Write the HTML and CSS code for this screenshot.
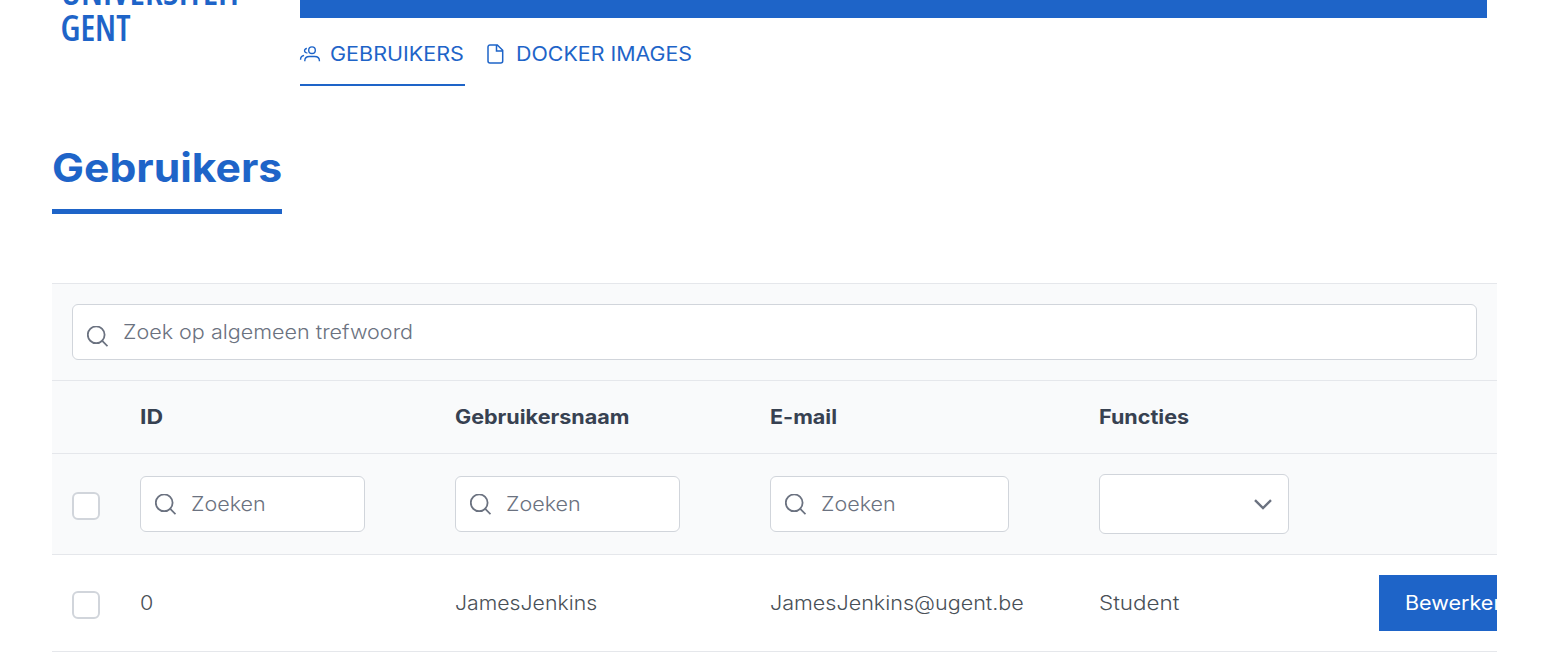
FILE: index.html
```html
<!DOCTYPE html>
<html lang="nl">
<head>
<meta charset="utf-8">
<title>Gebruikers</title>
<link rel="stylesheet" href="styles.css">
</head>
<body>
<svg class="defs" aria-hidden="true">
  <symbol id="search" viewBox="0 0 21 21"><circle cx="9.200" cy="8.800" r="8.400" /><path d="M15 14.700L20.500 20.200"/></symbol>
</svg>
<header class="header">
  <svg class="logo" width="200" height="60" viewBox="0 0 200 60" role="img" aria-label="Universiteit Gent">
    <text x="7" y="5" textLength="181" lengthAdjust="spacingAndGlyphs">UNIVERSITEIT</text>
    <text x="6.500" y="41" textLength="70" lengthAdjust="spacing">GENT</text>
  </svg>
  <div class="header-main">
    <div class="bar"></div>
    <nav class="tabs">
      <a class="tab active"><svg class="icon-users" width="20" height="16" viewBox="0 0 20 16"><circle cx="12" cy="4.200" r="3.300"/><path d="M4.800 15.200v-.5c0-2.600 2-4.200 4.500-4.200h5.400c2.600 0 4.700 1.600 4.700 4.200v.5M6.900 2.500a2.200 2.200 0 1 0 .5 4.300M.6 13.800v-.6c0-2 1.400-3.400 3.500-3.700"/></svg><span class="wide t-users">GEBRUIKERS</span></a>
      <a class="tab"><svg class="icon-file" width="17" height="20" viewBox="0 0 17 20"><path d="M3 .9H10.300L15.700 6.300V17.100a2 2 0 0 1-2 2H3a2 2 0 0 1-2-2V2.900a2 2 0 0 1 2-2ZM9.500 1V7H15.600"/></svg><span class="wide t-docker">DOCKER IMAGES</span></a>
    </nav>
  </div>
</header>
<main class="content">
  <h1 class="title"><span class="wide t-title">Gebruikers</span></h1>
  <section class="table">
    <div class="global">
      <label class="field field-wide"><svg class="icon-search" width="21" height="21"><use href="#search"/></svg><span class="wide t-global">Zoek op algemeen trefwoord</span></label>
    </div>
    <div class="row head">
      <div></div>
      <div class="cell"><span class="wide t-id">ID</span></div>
      <div class="cell"><span class="wide">Gebruikersnaam</span></div>
      <div class="cell"><span class="wide">E-mail</span></div>
      <div class="cell"><span class="wide">Functies</span></div>
      <div></div>
    </div>
    <div class="row filters">
      <div class="cell"><span class="checkbox"></span></div>
      <div class="cell"><label class="field short"><svg class="icon-search" width="21" height="21"><use href="#search"/></svg><span class="wide">Zoeken</span></label></div>
      <div class="cell"><label class="field short"><svg class="icon-search" width="21" height="21"><use href="#search"/></svg><span class="wide">Zoeken</span></label></div>
      <div class="cell"><label class="field medium"><svg class="icon-search" width="21" height="21"><use href="#search"/></svg><span class="wide">Zoeken</span></label></div>
      <div class="cell"><div class="select"><svg class="chevron" width="18" height="11" viewBox="0 0 18 11"><path d="M1 1.200L9 9L17 1.200"/></svg></div></div>
      <div></div>
    </div>
    <div class="row record">
      <div class="cell"><span class="checkbox"></span></div>
      <div class="cell"><span class="wide">0</span></div>
      <div class="cell"><span class="wide t-user">JamesJenkins</span></div>
      <div class="cell"><span class="wide">JamesJenkins@ugent.be</span></div>
      <div class="cell"><span class="wide t-student">Student</span></div>
      <div class="cell action"><span class="button"><span class="wide">Bewerken</span></span></div>
    </div>
  </section>
</main>
</body>
</html>
```
FILE: styles.css
```css
* { box-sizing: border-box; }
body {
  margin: 0;
  height: 652px;
  overflow: hidden;
  background: #fff;
  color: #495057;
  font: 300 19.5px/28px Inter, "Open Sans", sans-serif;
}
svg { flex: none; overflow: visible; }
.defs { position: absolute; width: 0; height: 0; }
.header { display: flex; padding: 0 54px; height: 86px; }
.logo { margin-right: 46px; overflow: hidden; fill: #1e64c8; font: 600 35.500px "Open Sans", sans-serif; font-stretch: 75%; }
.header-main { flex: 1; }
.bar { height: 18px; background: #1e64c8; }
.tabs { display: flex; gap: 22px; height: 68px; }
.tab {
  display: flex;
  align-items: center;
  height: 68px;
  padding-bottom: 2px;
  padding-top: 7px;
  border-bottom: 2px solid transparent;
  color: #1e64c8;
  font-weight: 400;
  white-space: nowrap;
}
.tab.active { width: 165px; border-color: #1e64c8; }
.tab svg { fill: none; stroke: #1e64c8; stroke-width: 1.4; margin-top: 1px; }
.tab .icon-file { stroke-width: 1.500; margin-right: 12px; margin-top: 0; }
.tab .icon-users { margin-right: 10px; }
.content { padding: 59px 44px 0 52px; }
.title {
  width: 230px;
  height: 69px;
  margin: 0 0 69px;
  border-bottom: 5px solid #1e64c8;
  color: #1e64c8;
  font-size: 40px;
  font-weight: 700;
  line-height: 46px;
  white-space: nowrap;
}
/* extended letterforms */
.wide { display: inline-block; transform: scaleX(1.105); transform-origin: 0 50%; }
.t-title { transform: scaleX(1.066); }
.t-docker { transform: scaleX(1.097); }
.t-id { transform: scaleX(1.180); }
.t-user { transform: scaleX(1.090); }
.t-student { transform: scaleX(1.150); }
.table { overflow: hidden; border-top: 1px solid #e5e7eb; }
.global { height: 97px; padding: 20px; background: #f9fafb; border-bottom: 1px solid #e5e7eb; }
.row {
  display: grid;
  grid-template-columns: 68px 315px 315px 329px 280px 138px;
  align-items: center;
  border-bottom: 1px solid #e5e7eb;
}
.cell { padding: 0 20px; white-space: nowrap; }
.head { height: 73px; background: #f9fafb; color: #374151; font-weight: 700; }
.filters { height: 101px; background: #f9fafb; }
.record { height: 97px; }
.field {
  display: flex;
  align-items: center;
  height: 56px;
  padding-left: 14px;
  background: #fff;
  border: 1px solid #d1d5db;
  border-radius: 6px;
  color: #6b7280;
}
.short { width: 225px; }
.medium { width: 239px; }
.icon-search { fill: none; stroke: #6b7280; stroke-width: 1.800; margin-right: 15px; }
.field-wide .icon-search { margin-top: 8px; }
.checkbox {
  display: block;
  width: 28px;
  height: 28px;
  margin-top: 4px;
  background: #fff;
  border: 2px solid #d1d5db;
  border-radius: 6px;
}
.select {
  display: flex;
  align-items: center;
  justify-content: flex-end;
  width: 190px;
  height: 60px;
  padding-right: 16px;
  background: #fff;
  border: 1px solid #d1d5db;
  border-radius: 6px;
}
.chevron { fill: none; stroke: #6b7280; stroke-width: 2.400; }
.action { padding-right: 0; }
.button {
  display: block;
  width: 150px;
  height: 56px;
  padding-left: 26px;
  background: #1e64c8;
  color: #fff;
  font-weight: 400;
  line-height: 56px;
}
```
